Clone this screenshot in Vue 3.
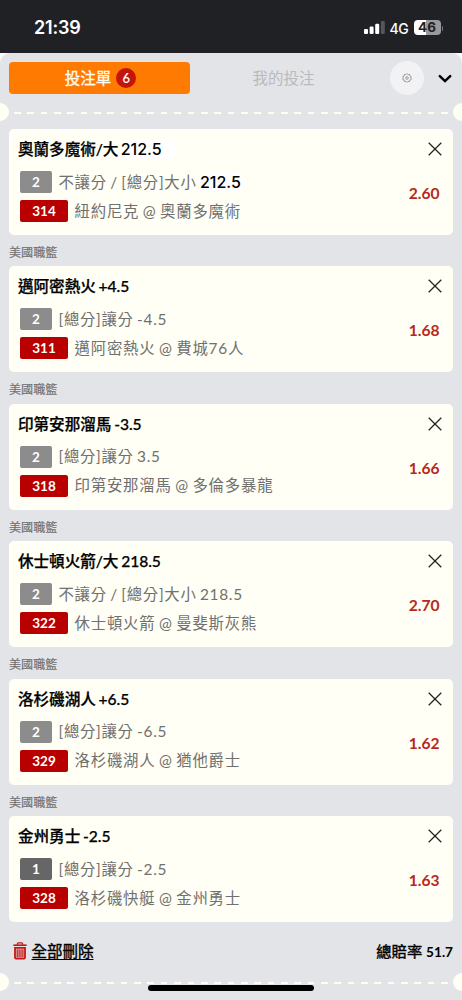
<script setup>
const bets = [
  { id: 314, n: 2, title: '奧蘭多魔術/大', big: '212.5', market: '不讓分 / [總分]大小', line: '212.5', match: '紐約尼克 @ 奧蘭多魔術', odds: '2.60' },
  { id: 311, n: 2, title: '邁阿密熱火 +4.5', market: '[總分]讓分 -4.5', match: '邁阿密熱火 @ 費城76人', odds: '1.68' },
  { id: 318, n: 2, title: '印第安那溜馬 -3.5', market: '[總分]讓分 3.5', match: '印第安那溜馬 @ 多倫多暴龍', odds: '1.66' },
  { id: 322, n: 2, title: '休士頓火箭/大 218.5', market: '不讓分 / [總分]大小 218.5', match: '休士頓火箭 @ 曼斐斯灰熊', odds: '2.70' },
  { id: 329, n: 2, title: '洛杉磯湖人 +6.5', market: '[總分]讓分 -6.5', match: '洛杉磯湖人 @ 猶他爵士', odds: '1.62' },
  { id: 328, n: 1, title: '金州勇士 -2.5', market: '[總分]讓分 -2.5', match: '洛杉磯快艇 @ 金州勇士', odds: '1.63' },
]
</script>

<template>
  <div class="phone">
    <header class="status">
      <span class="time">21:39</span>
      <div class="status-right">
        <svg class="signal" width="22" height="14" viewBox="0 0 22 14">
          <rect x="0" y="9" width="4" height="5" rx="1.1" fill="#fff" />
          <rect x="5.6" y="6.6" width="4" height="7.4" rx="1.1" fill="#fff" />
          <rect x="11.2" y="3.8" width="4" height="10.2" rx="1.1" fill="#fff" />
          <rect x="16.8" y="1" width="4" height="13" rx="1.1" fill="#55565a" />
        </svg>
        <span class="net">4G</span>
        <span class="battery">46</span>
        <i class="cap"></i>
      </div>
    </header>

    <div class="corners">
      <main class="sheet">
        <nav class="tabs">
          <div class="tab active">投注單<span class="count">6</span></div>
          <div class="tab idle">我的投注</div>
          <div class="gear">
            <svg width="10" height="10" viewBox="0 0 20 20" fill="none" stroke="#8d8d8d" stroke-width="1.7">
              <path d="M10 1.2 12.1 3.4 15.2 2.9 15.8 5.9 18.6 7.3 17.3 10 18.6 12.7 15.8 14.1 15.2 17.1 12.1 16.6 10 18.8 7.9 16.6 4.8 17.1 4.2 14.1 1.4 12.7 2.7 10 1.4 7.3 4.2 5.9 4.8 2.9 7.9 3.4Z" stroke-linejoin="round" />
              <circle cx="10" cy="10" r="2.6" />
            </svg>
          </div>
          <svg class="chevron" width="14" height="10" viewBox="0 0 14 10">
            <path d="M1.8 2.2 7 7.1 12.2 2.2" fill="none" stroke="#000" stroke-width="2.5" stroke-linecap="round" />
          </svg>
        </nav>

        <div class="perforation"><i class="hole left"></i><i class="hole right"></i></div>

        <section class="list">
          <div v-for="(bet, i) in bets" :key="bet.id" class="entry">
            <div v-if="i" class="league">美國職籃</div>
            <article class="card">
              <div class="info">
                <h3 class="title">{{ bet.title }}<template v-if="bet.big">&nbsp;<span class="patch">{{ bet.big }}</span></template></h3>
                <div class="row">
                  <span class="tag" :class="{ dark: bet.n === 1 }">{{ bet.n }}</span>
                  <span class="desc market">{{ bet.market }}<template v-if="bet.line">&nbsp;<span class="patch small">{{ bet.line }}</span></template></span>
                </div>
                <div class="row">
                  <span class="tag red">{{ bet.id }}</span>
                  <span class="desc">{{ bet.match }}</span>
                </div>
              </div>
              <div class="side">
                <svg class="close" width="14" height="14" viewBox="0 0 14 14">
                  <path d="M.7 .7 13.3 13.3M13.3 .7 .7 13.3" stroke="#222" stroke-width="1.25" />
                </svg>
                <span class="odds">{{ bet.odds }}</span>
              </div>
            </article>
          </div>
        </section>

        <div class="summary">
          <div class="clear">
            <svg width="14" height="18" viewBox="0 0 14 18">
              <path d="M4.4 2.8V1.7Q4.4.8 5.3.8H8.7Q9.6.8 9.6 1.7V2.8" fill="none" stroke="#c81414" stroke-width="1.3" />
              <path d="M.4 2.4H13.6V4H.4Z" fill="#c81414" />
              <path d="M2 5.9H12V15.5Q12 16.5 11 16.5H3Q2 16.5 2 15.5Z" fill="none" stroke="#c81414" stroke-width="1.8" />
              <path d="M4.2 7.2V15M6.1 7.2V15M8 7.2V15M9.9 7.2V15" stroke="#c81414" stroke-width="1.25" />
            </svg>
            <span class="clear-text">全部刪除</span>
          </div>
          <div class="total">總賠率 <span class="total-num">51.7</span></div>
        </div>

        <div class="perforation bottom"><i class="hole left"></i><i class="hole right"></i><b class="home"></b></div>
      </main>
    </div>
  </div>
</template>

<style>
body { margin: 0; background: #e3e4e7; }
</style>

<style scoped>
* { box-sizing: border-box; }
.phone {
  width: 462px; height: 1000px; overflow: hidden; display: flex; flex-direction: column;
  font-family: Lato, "Noto Sans CJK TC", sans-serif; background: #202125; color: #111;
}
.status { height: 53px; flex: none; display: flex; justify-content: space-between; padding: 0 19px 0 34px; color: #fff; font-family: Inter, sans-serif; }
.time { font-size: 18px; font-weight: 600; line-height: 22px; margin-top: 17px; letter-spacing: -.2px; }
.status-right { display: flex; align-items: center; height: 18px; margin-top: 19px; }
.signal { margin-top: -2px; }
.net { font-size: 14px; font-weight: 500; margin-left: 3.5px; width: 24px; letter-spacing: -.4px; }
.battery { width: 27px; height: 15px; margin-top: -1px; border-radius: 4px; background: linear-gradient(90deg, #fff 46%, #98999d 46%); color: #202125; font-size: 13.5px; font-weight: 700; line-height: 15px; text-align: center; }
.cap { width: 1.5px; height: 5px; margin-left: 1px; background: #77787c; border-radius: 0 2px 2px 0; }
.corners { flex: 1; background: #fbfbfc; min-height: 0; }
.sheet { height: 947px; background: #e3e4e7; border-radius: 10px 10px 0 0; display: flex; flex-direction: column; }
.tabs { height: 50px; flex: none; display: flex; align-items: center; padding: 0 10px 0 9px; }
.tab { height: 32px; line-height: 22px; display: flex; align-items: center; justify-content: center; font-size: 15.5px; }
.active { width: 181px; background: #ff7a00; border-radius: 4px; color: #fffef2; -webkit-text-stroke: .3px #fffef2; gap: 5px; padding-left: 2px; }
.count { width: 20px; height: 20px; border-radius: 50%; background: #c4150c; color: #fff; font-size: 13px; font-weight: 600; line-height: 20px; text-align: center; -webkit-text-stroke: 0; }
.idle { width: 187px; color: #b9babc; }
.gear { width: 34px; height: 34px; border-radius: 50%; background: #f2f2f4; margin-left: 13px; display: flex; align-items: center; justify-content: center; }
.chevron { margin-left: 14px; margin-top: 2px; }
.perforation { position: relative; height: 18px; flex: none; display: flex; align-items: center; }
.perforation::before { content: ""; height: 2px; margin: 2px 0 0 13.5px; width: 436px; background: repeating-linear-gradient(90deg, #fffff0 0 6.6px, transparent 6.6px 13.35px); }
.hole { position: absolute; width: 18px; height: 18px; border-radius: 50%; background: #fffff3; top: 0; }
.left { left: -9px; }
.right { right: -9px; }
.list { padding: 8px 9px 0; flex: none; }
.league { height: 31.45px; line-height: 36px; font-size: 12.1px; color: #707070; -webkit-text-stroke: .15px #707070; }
.card { height: 106px; background: #fffff5; border-radius: 5px; display: flex; justify-content: space-between; padding: 0 12px 0 9px; }
.title { margin: 0; padding-top: 8px; height: 42px; font-size: 15.6px; line-height: 24px; font-weight: 500; -webkit-text-stroke: .25px #000; word-spacing: -1px; letter-spacing: -.05px; color: #000; white-space: nowrap; }
.patch { font-family: Inter, sans-serif; font-size: 16px; font-weight: 500; letter-spacing: 0; color: #000; background: #fff; border-radius: 8px; padding-right: 14px; margin-left: -.5px; -webkit-text-stroke: 0; }
.row { height: 22px; display: flex; align-items: center; margin: 0 0 7px 2px; }
.tag { width: 32px; height: 22px; border-radius: 2px; background: #8c8c8c; color: #fff; font-size: 13.5px; font-weight: 700; line-height: 23px; text-align: center; }
.tag.dark { background: #666; }
.tag.red { width: 48px; background: #b90000; }
.desc { margin-left: 6.5px; font-size: 15.4px; line-height: 22px; margin-top: -1px; letter-spacing: .8px; word-spacing: -1.2px; color: #707070; white-space: nowrap; }
.desc.market { letter-spacing: .7px; }
.patch.small { padding-right: 2px; margin-left: 0; letter-spacing: 0; }
.side { display: flex; flex-direction: column; align-items: flex-end; padding-top: 13px; }
.close { margin-right: -1px; }
.odds { margin: 27px 1.5px 0 0; font-size: 15.6px; line-height: 20px; font-weight: 700; color: #b92820; }
.summary { flex: none; height: 51px; display: flex; justify-content: space-between; align-items: flex-start; padding: 16.6px 9px 0 13px; line-height: 24px; color: #000; }
.clear { display: flex; align-items: center; font-size: 15.5px; -webkit-text-stroke: .4px #000; }
.clear-text { margin-left: 4.5px; text-decoration: underline; text-decoration-thickness: 1.3px; text-underline-offset: 2px; }
.total { font-size: 15.3px; -webkit-text-stroke: .4px #000; }
.total-num { font-size: 13.6px; font-weight: 700; -webkit-text-stroke: 0; }
.home { position: absolute; left: 148px; top: 12px; width: 166px; height: 6px; border-radius: 3px; background: #000; }
</style>
